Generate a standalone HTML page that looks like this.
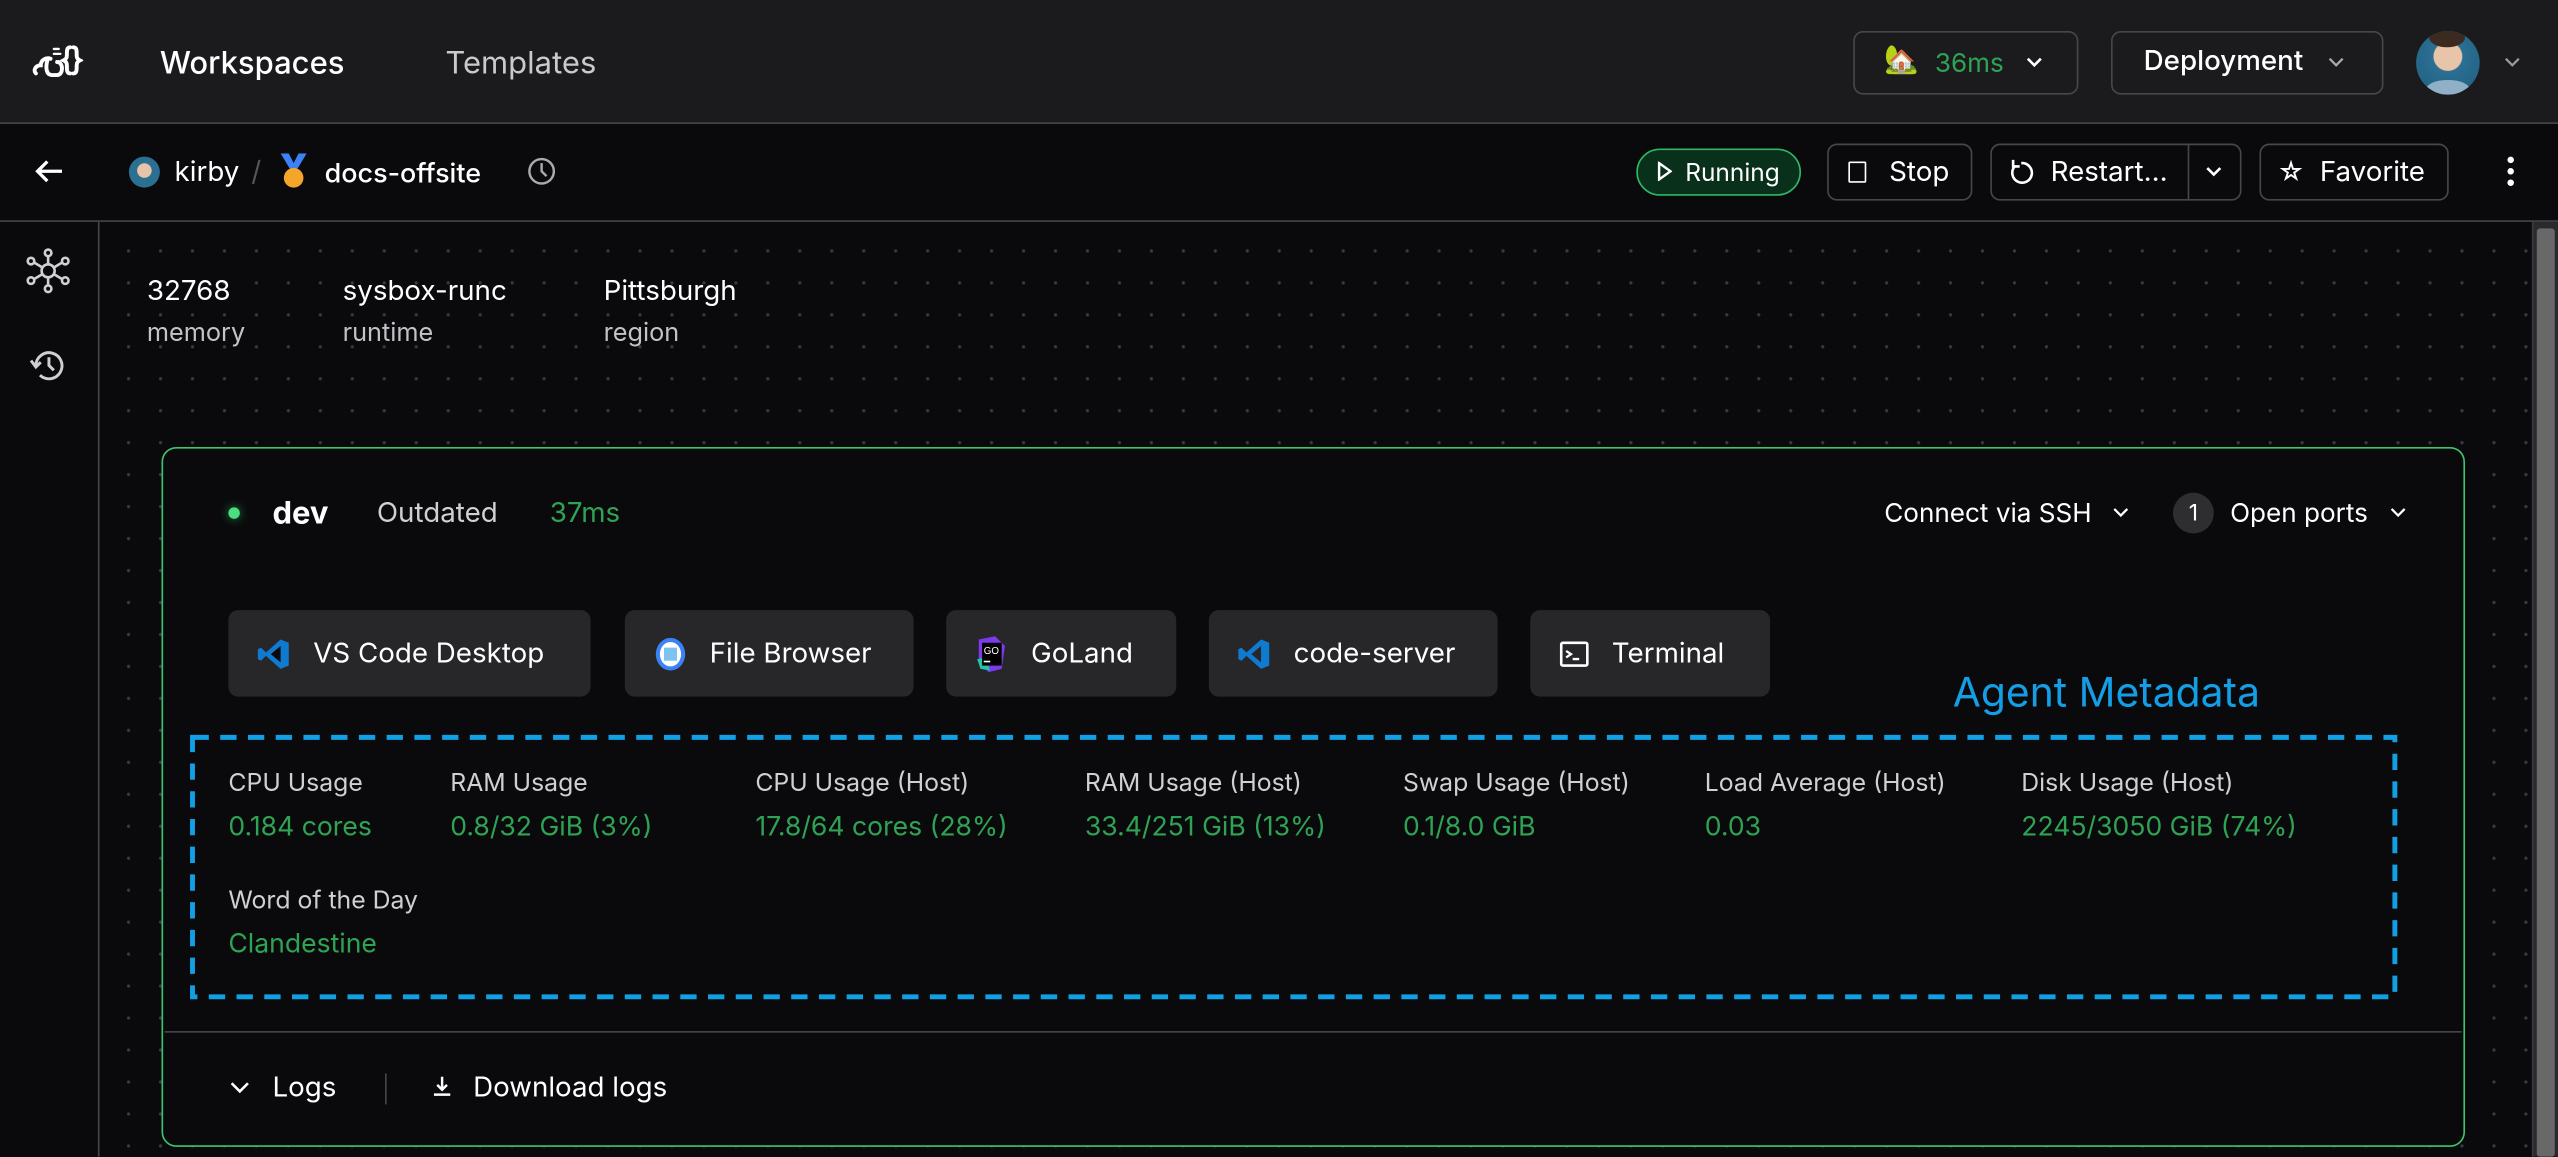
<!DOCTYPE html>
<html><head><meta charset="utf-8">
<style>
html,body{margin:0;padding:0;background:#0a0a0c;overflow:hidden;width:2558px;height:1156px}
#w{position:absolute;left:0;top:0;width:1568px;height:709px;transform:scale(1.63138);transform-origin:0 0;font-family:"Inter","Liberation Sans",sans-serif;color:#fff;background:#0a0a0c}
.a{position:absolute;white-space:nowrap}
.btn{position:absolute;border:1px solid #46464d;border-radius:6px;box-sizing:border-box}
.app{position:absolute;top:374px;height:53px;background:#27272a;border-radius:6px;font-size:17px;display:flex;align-items:center;box-sizing:border-box;padding-left:18px}
.app svg{margin-right:14px}
.lbl{position:absolute;font-size:15.2px;color:#cfcfd4}
.val{position:absolute;font-size:16.3px;color:#2fa354}
</style></head><body><div id="w">
<div class="a" style="left:0;top:0;width:1568px;height:75px;background:#1b1b1e;border-bottom:1px solid #45454b"></div>
<svg class="a" style="left:19px;top:24px" width="32" height="28" viewBox="0 0 32 28" fill="none" stroke="#fff" stroke-width="2.4" stroke-linecap="round"><path d="M3 21c-2-2 0-5 3-5 0-3 3-5 6-4"/><path d="M10 13c-1 4-1 9 3 9h3c2 0 3-2 3-4s-1-4-3-4"/><path d="M24 5c-2 0-2 2-2 4s0 3-2 4c2 1 2 2 2 4s0 4 2 4"/><path d="M26 5c2 0 2 2 2 4s0 3 2 4c-2 1-2 2-2 4s0 4-2 4"/><path d="M14 6h3M14 9h4" stroke-width="1.4"/></svg>
<div class="a" style="left:98px;top:27px;font-size:19px;font-weight:500">Workspaces</div>
<div class="a" style="left:273px;top:27px;font-size:19px;color:#c9c9ce">Templates</div>
<div class="btn" style="left:1136px;top:19px;width:138px;height:39px"></div>
<div class="a" style="left:1155px;top:27px;font-size:17px">🏡</div>
<div class="a" style="left:1186px;top:28px;font-size:16px;color:#2fa354">36ms</div>
<svg class="a" style="left:1242px;top:34px" width="10" height="8"><path d="M1 2l4 4 4-4" stroke="#fff" stroke-width="1.6" fill="none"/></svg>
<div class="btn" style="left:1294px;top:19px;width:167px;height:39px"></div>
<div class="a" style="left:1314px;top:28px;font-size:17px;font-weight:500">Deployment</div>
<svg class="a" style="left:1427px;top:34px" width="10" height="8"><path d="M1 2l4 4 4-4" stroke="#aaa" stroke-width="1.4" fill="none"/></svg>
<div class="a" style="left:1481px;top:19px;width:39px;height:39px;border-radius:50%;background:radial-gradient(circle at 50% 40%,#e8c4a8 0 28%,#2b6f92 30%,#1f5d80);overflow:hidden"><div style="position:absolute;left:8px;top:-2px;width:22px;height:12px;background:#3b2a20;border-radius:50%"></div><div style="position:absolute;left:6px;top:30px;width:27px;height:12px;background:#8fb0c6;border-radius:50% 50% 0 0"></div></div>
<svg class="a" style="left:1535px;top:34px" width="10" height="8"><path d="M1 2l4 4 4-4" stroke="#999" stroke-width="1.4" fill="none"/></svg>
<div class="a" style="left:0;top:76px;width:1568px;height:59px;background:#0a0a0c;border-bottom:1px solid #45454b"></div>
<svg class="a" style="left:21px;top:97px" width="18" height="16"><path d="M17 8H2M8 2L2 8l6 6" stroke="#fff" stroke-width="2" fill="none"/></svg>
<div class="a" style="left:79px;top:96px;width:19px;height:19px;border-radius:50%;background:radial-gradient(circle at 50% 45%,#e8c4a8 0 30%,#2b6f92 33%)"></div>
<div class="a" style="left:107px;top:96px;font-size:17px">kirby</div>
<div class="a" style="left:154px;top:96px;font-size:17px;color:#555">/</div>
<svg class="a" style="left:170px;top:94px" width="20" height="22"><path d="M2 0h5l3 6 3-6h5l-6 10H8z" fill="#3b82f6"/><circle cx="10" cy="15" r="6" fill="#f4a62a"/></svg>
<div class="a" style="left:199px;top:96px;font-size:16.5px;font-weight:500">docs-offsite</div>
<svg class="a" style="left:323px;top:96px" width="18" height="18"><circle cx="9" cy="9" r="7.5" stroke="#aaa" stroke-width="1.5" fill="none"/><path d="M9 4v5l3 3" stroke="#aaa" stroke-width="1.5" fill="none"/></svg>
<div class="a" style="left:1003px;top:91px;width:101px;height:29px;border:1.5px solid #2fb766;background:#08301a;border-radius:15px;box-sizing:border-box"></div>
<svg class="a" style="left:1015px;top:99px" width="10" height="12"><path d="M2 1l7 5-7 5z" stroke="#fff" stroke-width="1.5" fill="none"/></svg>
<div class="a" style="left:1033px;top:96px;font-size:15px">Running</div>
<div class="btn" style="left:1120px;top:88px;width:89px;height:35px"></div>
<div class="a" style="left:1133px;top:99px;width:9px;height:11px;border:1.6px solid #fff;border-radius:1px"></div>
<div class="a" style="left:1158px;top:96px;font-size:17px">Stop</div>
<div class="btn" style="left:1220px;top:88px;width:154px;height:35px"></div>
<div class="a" style="left:1341px;top:88px;width:1px;height:35px;background:#46464d"></div>
<svg class="a" style="left:1231px;top:96px" width="16" height="18"><path d="M4 6a6 6 0 1 0 4-2" stroke="#fff" stroke-width="1.6" fill="none"/><path d="M3 2v4h4" stroke="#fff" stroke-width="1.6" fill="none"/></svg>
<div class="a" style="left:1257px;top:96px;font-size:17px">Restart...</div>
<svg class="a" style="left:1352px;top:101px" width="10" height="8"><path d="M1 2l4 4 4-4" stroke="#fff" stroke-width="1.6" fill="none"/></svg>
<div class="btn" style="left:1385px;top:88px;width:116px;height:35px"></div>
<div class="a" style="left:1396px;top:95px;font-size:16px">☆</div>
<div class="a" style="left:1422px;top:96px;font-size:17px">Favorite</div>
<svg class="a" style="left:1535px;top:95px" width="8" height="20"><circle cx="4" cy="3" r="2" fill="#fff"/><circle cx="4" cy="10" r="2" fill="#fff"/><circle cx="4" cy="17" r="2" fill="#fff"/></svg>
<div class="a" style="left:60px;top:136px;width:1px;height:573px;background:#45454b"></div>
<svg class="a" style="left:16px;top:152px" width="27" height="28" fill="none" stroke="#cfcfd4" stroke-width="1.6"><circle cx="13.5" cy="14" r="4"/><circle cx="13.5" cy="3" r="2"/><circle cx="13.5" cy="25" r="2"/><circle cx="3" cy="8" r="2"/><circle cx="24" cy="8" r="2"/><circle cx="3" cy="20" r="2"/><circle cx="24" cy="20" r="2"/><path d="M13.5 5v5M13.5 18v5M5 9l5 3M22 9l-5 3M5 19l5-3M22 19l-5-3"/></svg>
<svg class="a" style="left:18px;top:213px" width="24" height="22" fill="none" stroke="#cfcfd4" stroke-width="1.8"><path d="M4 11a8 8 0 1 1 2.5 6"/><path d="M1 8l3 4 3-3"/><path d="M12 6v5l3 3"/></svg>
<div class="a" style="left:61px;top:136px;width:1491px;height:573px;background-image:radial-gradient(circle,#3a3a40 0.8px,transparent 1.2px);background-size:19.6px 19.6px;background-position:8px 8px"></div>
<div class="a" style="left:1552px;top:136px;width:16px;height:573px;background:#2a2a2e;border-left:1px solid #3a3a3e"></div>
<div class="a" style="left:1555px;top:140px;width:11px;height:569px;background:#686868;border-radius:2px"></div>
<div class="a" style="left:90px;top:169px;font-size:17px">32768</div>
<div class="a" style="left:90px;top:194px;font-size:15.5px;color:#c2c2c8">memory</div>
<div class="a" style="left:210px;top:169px;font-size:17px">sysbox-runc</div>
<div class="a" style="left:210px;top:194px;font-size:15.5px;color:#c2c2c8">runtime</div>
<div class="a" style="left:370px;top:169px;font-size:17px">Pittsburgh</div>
<div class="a" style="left:370px;top:194px;font-size:15.5px;color:#c2c2c8">region</div>
<div class="a" style="left:99px;top:274px;width:1412px;height:429px;border:1.5px solid #3ec46e;border-radius:9px;background:#0a0a0c;box-sizing:border-box"></div>
<div class="a" style="left:140px;top:311px;width:7px;height:7px;border-radius:50%;background:#4ade80;box-shadow:0 0 6px #1f8f4a"></div>
<div class="a" style="left:167px;top:303px;font-size:19px;font-weight:700">dev</div>
<div class="a" style="left:231px;top:305px;font-size:17px;color:#cfcfd4">Outdated</div>
<div class="a" style="left:337px;top:305px;font-size:17px;color:#2fa354">37ms</div>
<div class="a" style="left:1155px;top:304px;font-size:16px">Connect via SSH</div>
<svg class="a" style="left:1295px;top:310px" width="10" height="8"><path d="M1 2l4 4 4-4" stroke="#fff" stroke-width="1.4" fill="none"/></svg>
<div class="a" style="left:1332px;top:302px;width:25px;height:25px;border-radius:50%;background:#2e2e31;font-size:14px;text-align:center;line-height:25px">1</div>
<div class="a" style="left:1367px;top:304px;font-size:16px">Open ports</div>
<svg class="a" style="left:1465px;top:310px" width="10" height="8"><path d="M1 2l4 4 4-4" stroke="#fff" stroke-width="1.4" fill="none"/></svg>
<div class="app" style="left:140px;width:222px"><svg width="20" height="20" viewBox="0 0 20 20"><path d="M14 1l5 2v14l-5 2L5 11l-3 3-2-1V7l2-1 3 3z" fill="#0e7bd1"/><path d="M14 5v10L8 10z" fill="#0a0a0c"/></svg>VS Code Desktop</div>
<div class="app" style="left:383px;width:177px"><svg width="20" height="22" viewBox="0 0 20 22"><ellipse cx="10" cy="11" rx="9" ry="10" fill="#3b82f6"/><ellipse cx="10" cy="11" rx="6.5" ry="7.5" fill="#fff"/><rect x="6" y="7" width="8" height="8" fill="#7cc3f0"/></svg>File Browser</div>
<div class="app" style="left:580px;width:141px"><svg width="20" height="22" viewBox="0 0 20 22"><path d="M2 2l10-2 6 6-2 14-8 2-6-6z" fill="#7c3aed"/><path d="M1 14l5-1 3 8-6-1z" fill="#22c5a6"/><rect x="4" y="4" width="12" height="14" fill="#000"/><text x="5" y="11" font-size="6" fill="#fff" font-family="Liberation Sans">GO</text><rect x="5" y="15" width="4" height="1" fill="#fff"/></svg>GoLand</div>
<div class="app" style="left:741px;width:177px"><svg width="20" height="20" viewBox="0 0 20 20"><path d="M14 1l5 2v14l-5 2L5 11l-3 3-2-1V7l2-1 3 3z" fill="#0e7bd1"/><path d="M14 5v10L8 10z" fill="#27272a"/></svg>code-server</div>
<div class="app" style="left:938px;width:147px"><svg width="18" height="16" viewBox="0 0 18 16"><rect x="1" y="1" width="16" height="14" rx="1" fill="none" stroke="#fff" stroke-width="1.6"/><path d="M4 6l3 2-3 2M8 11h4" stroke="#fff" stroke-width="1.4" fill="none"/></svg>Terminal</div>
<div class="a" style="left:1197px;top:410px;font-size:25px;color:#149ee6">Agent Metadata</div>
<svg class="a" style="left:116px;top:450px" width="1354" height="163"><rect x="2" y="2" width="1350" height="159" fill="none" stroke="#12a0e4" stroke-width="3" stroke-dasharray="10 7"/></svg>
<div class="lbl" style="left:140px;top:470px">CPU Usage</div><div class="val" style="left:140px;top:496px">0.184 cores</div>
<div class="lbl" style="left:276px;top:470px">RAM Usage</div><div class="val" style="left:276px;top:496px">0.8/32 GiB (3%)</div>
<div class="lbl" style="left:463px;top:470px">CPU Usage (Host)</div><div class="val" style="left:463px;top:496px">17.8/64 cores (28%)</div>
<div class="lbl" style="left:665px;top:470px">RAM Usage (Host)</div><div class="val" style="left:665px;top:496px">33.4/251 GiB (13%)</div>
<div class="lbl" style="left:860px;top:470px">Swap Usage (Host)</div><div class="val" style="left:860px;top:496px">0.1/8.0 GiB</div>
<div class="lbl" style="left:1045px;top:470px">Load Average (Host)</div><div class="val" style="left:1045px;top:496px">0.03</div>
<div class="lbl" style="left:1239px;top:470px">Disk Usage (Host)</div><div class="val" style="left:1239px;top:496px">2245/3050 GiB (74%)</div>
<div class="lbl" style="left:140px;top:542px">Word of the Day</div><div class="val" style="left:140px;top:568px">Clandestine</div>
<div class="a" style="left:101px;top:632px;width:1408px;height:1px;background:#45454b"></div>
<svg class="a" style="left:141px;top:663px" width="12" height="8"><path d="M1 1l5 5 5-5" stroke="#fff" stroke-width="1.6" fill="none"/></svg>
<div class="a" style="left:167px;top:657px;font-size:17px">Logs</div>
<div class="a" style="left:236px;top:658px;width:1px;height:19px;background:#45454b"></div>
<svg class="a" style="left:265px;top:659px" width="12" height="14"><path d="M6 1v8M3 6l3 3 3-3M1 12h10" stroke="#fff" stroke-width="1.5" fill="none"/></svg>
<div class="a" style="left:290px;top:657px;font-size:17px">Download logs</div>
</div></body></html>
